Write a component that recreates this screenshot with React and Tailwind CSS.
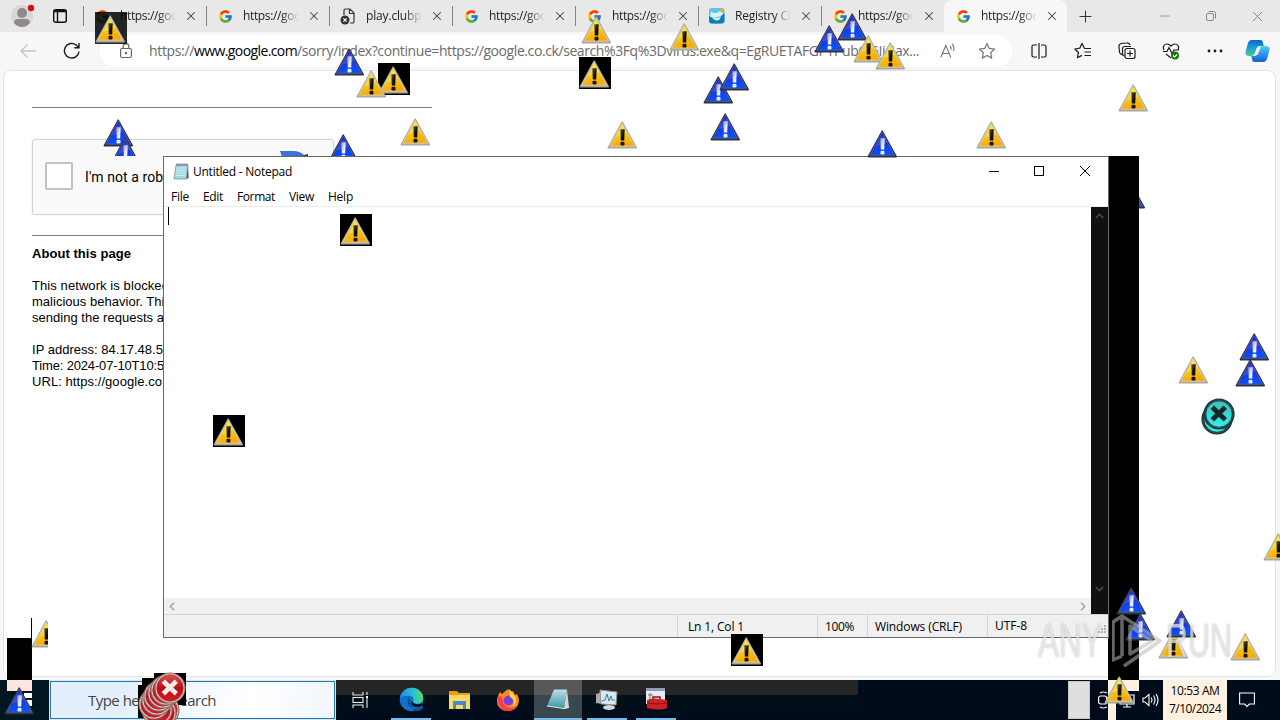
import React, { useLayoutEffect, useRef, useState } from 'react';
import { FcGoogle } from 'react-icons/fc';
import { Minus, Plus, X } from 'lucide-react';

// Text run that is spaced out to an exact width
const Fit = ({ w, className = '', children }) => {
  const ref = useRef(null);
  const [spacing, setSpacing] = useState(0);

  useLayoutEffect(() => {
    const width = ref.current.getBoundingClientRect().width;
    setSpacing((w - width) / ref.current.textContent.length);
  }, [w]);

  return (
    <span ref={ref} className={`inline-block whitespace-pre ${className}`} style={{ letterSpacing: `${spacing}px` }}>
      {children}
    </span>
  );
};

const Triangle = ({ x, y, blue, box, clip, glass }) => (
  <div
    className={`absolute h-8 overflow-hidden ${clip ? 'w-[17px]' : 'w-8'} ${box ? 'bg-black' : ''} ${glass ? 'bg-black/85' : ''}`}
    style={{ left: x, top: y }}
  >
    <svg width="32" height="32" viewBox="0 0 32 32">
      <defs>
        <linearGradient id="yellow" x1="0" y1="0" x2="0.25" y2="1">
          <stop offset="0" stopColor="#fffa00" />
          <stop offset="0.45" stopColor="#f4d01e" />
          <stop offset="1" stopColor="#f7ac08" />
        </linearGradient>
        <linearGradient id="blue" x1="0" y1="0" x2="0.25" y2="1">
          <stop offset="0" stopColor="#0000e8" />
          <stop offset="0.45" stopColor="#1a30da" />
          <stop offset="1" stopColor="#0a50fa" />
        </linearGradient>
        <linearGradient id="mark" x1="0" y1="0" x2="1" y2="1">
          <stop offset="0" stopColor="#6b5a28" />
          <stop offset="0.5" stopColor="#1a1408" />
          <stop offset="1" stopColor="#000" />
        </linearGradient>
        <linearGradient id="bluemark" x1="0" y1="0" x2="1" y2="1">
          <stop offset="0" stopColor="#8d9ad8" />
          <stop offset="0.6" stopColor="#e8ecfa" />
          <stop offset="1" stopColor="#fff" />
        </linearGradient>
      </defs>
      <path d="M15.2 4 29.3 29.7H1.3z" fill={blue ? '#2c324c' : '#aaa6a0'} stroke={blue ? '#2c324c' : '#aaa6a0'} strokeWidth="1.4" strokeLinejoin="round" />
      <path d="M15.2 5.4 27.7 28.2H2.8z" fill={blue ? 'url(#blue)' : 'url(#yellow)'} stroke={blue ? '#59607c' : '#d8cfae'} strokeWidth="0.9" strokeLinejoin="round" />
      <path d="M15.2 7.5 8.5 19.500c5-1 10-3 12-4.500z" fill="#fff" opacity={blue ? 0.12 : 0.22} />
      <path d="M13.3 11.300h4.400l-.5 11.200h-3.400z" fill={blue ? 'url(#bluemark)' : 'url(#mark)'} />
      <rect x="13.500" y="23.700" width="4" height="3.800" rx="1.200" fill={blue ? '#e9ebff' : '#1a1408'} />
    </svg>
  </div>
);

const ErrorBall = ({ x, y, teal }) => (
  <div className="absolute h-[33px] w-[33px]" style={{ left: x, top: y }}>
    <svg width="33" height="33" viewBox="0 0 33 33">
      <defs>
        <linearGradient id="red" x1="0" y1="0" x2="0" y2="1">
          <stop offset="0" stopColor="#dc5450" />
          <stop offset="0.5" stopColor="#bc0c16" />
          <stop offset="1" stopColor="#d41c26" />
        </linearGradient>
        <linearGradient id="teal" x1="0" y1="0" x2="0" y2="1">
          <stop offset="0" stopColor="#3dbcba" />
          <stop offset="1" stopColor="#2ff0ea" />
        </linearGradient>
      </defs>
      <circle cx="16" cy="16" r="15.600" fill={teal ? '#1f3436' : '#8f6a68'} />
      <circle cx="16" cy="16" r="14.500" fill={teal ? '#2c4a4c' : '#dccdc8'} />
      <circle cx="16" cy="16" r="13.200" fill={teal ? 'url(#teal)' : 'url(#red)'} stroke={teal ? '#122c30' : '#a03030'} strokeWidth="0.7" />
      <path d="m9.300 9.300 13 12.400M22.300 9.300l-13 12.400" stroke={teal ? '#16272a' : '#f0ece6'} strokeWidth="4.800" />
    </svg>
  </div>
);

const PageError = () => (
  <svg width="16" height="18" viewBox="0 0 16 18" fill="none" stroke="#333" strokeWidth="1.2">
    <path d="M4 8V3.500A1.500 1.500 0 0 1 5.500 2H10l4 4v8.500a1.500 1.500 0 0 1-1.500 1.500H10M9.500 2v4.500H14" />
    <circle cx="5" cy="13" r="4.500" fill="#333" stroke="none" />
    <path d="m3.400 11.400 3.200 3.200m0-3.200-3.200 3.200" stroke="#fff" />
  </svg>
);

const CleanerIcon = () => (
  <svg width="16" height="16" viewBox="0 0 16 16">
    <rect width="15.500" height="15.500" rx="3" fill="#5cc4e4" />
    <path d="M0 8q8 5 15.500-3v7.500a3 3 0 0 1-3 3H3a3 3 0 0 1-3-3z" fill="#0a7fb8" />
    <path d="M2 3.500q5 4 11-2L14 6Q8 12 1 8.500z" fill="#d7f2f8" />
    <path d="M3 9q5 3 9-1-1 5-5 4.500Q4 12 3 9z" fill="#e6f8fb" />
    <circle cx="13" cy="2.500" r="2" fill="#f3a33a" />
  </svg>
);

const tabs = [
  { title: 'https://goo' },
  { title: 'https://goo' },
  { title: 'play.clubpe', icon: <PageError /> },
  { title: 'https://goo' },
  { title: 'https://goo' },
  { title: 'Registry Cle', icon: <CleanerIcon /> },
  { title: 'https://goo' },
  { title: 'https://goo', active: true },
];

const TabBar = () => (
  <div className="flex h-8 shrink-0 items-stretch bg-[#e8e8e8]">
    <div className="flex w-[83px] items-center pl-[11px]">
      <svg width="24" height="24" viewBox="0 0 24 24" className="shrink-0">
        <circle cx="11" cy="12" r="11" fill="#d9d7d5" />
        <circle cx="11" cy="9" r="5" fill="#8e8a88" />
        <path d="M3 19q0-4 4-4h8q4 0 4 4-3.500 4-8 4t-8-4z" fill="#8e8a88" />
        <circle cx="20" cy="4" r="3.200" fill="#d70f1c" />
      </svg>
      <svg width="16" height="16" viewBox="0 0 16 16" fill="none" stroke="#111" strokeWidth="1.400" className="ml-[17px] shrink-0">
        <rect x="1.700" y="1.700" width="12.600" height="12.600" rx="2" />
        <path d="M5.500 4v10" />
        <path d="M2 3h12" strokeWidth="2.500" />
      </svg>
    </div>
    {tabs.map((tab, i) => (
      <div
        key={i}
        className={`flex w-[123px] items-center ${tab.active ? 'rounded-t-lg bg-[#f7f7f7] pl-[11px]' : ''}`}
      >
        {!tab.active && <span className="mr-[10px] h-5 w-px shrink-0 bg-[#858585]" />}
        <span className="flex w-4 shrink-0 justify-center">{tab.icon || <FcGoogle size={15} />}</span>
        <span className="ml-[10px] w-14 overflow-hidden text-[12px] leading-5 text-[#222] [mask-image:linear-gradient(to_right,black_68%,transparent)]">
          <Fit w={tab.icon ? 62 : 58}>{tab.title}</Fit>
        </span>
        <X size={14} strokeWidth={1.8} className="ml-2 shrink-0 text-[#444]" />
      </div>
    ))}
    <div className="flex flex-1 items-center justify-between pl-[9px]">
      <Plus size={19} strokeWidth={1.3} className="text-[#333]" />
      <div className="flex h-full items-center text-[#888]">
        <span className="flex w-[46px] justify-center"><Minus size={14} strokeWidth={1.5} /></span>
        <span className="flex w-[46px] justify-center">
          <svg width="12" height="12" viewBox="0 0 12 12" fill="none" stroke="currentColor">
            <rect x="1.500" y="3.500" width="7" height="7" rx="1.500" />
            <path d="M3.500 1.500h5a2 2 0 0 1 2 2v5" />
          </svg>
        </span>
        <span className="flex w-[46px] justify-center"><X size={17} strokeWidth={1.4} /></span>
      </div>
    </div>
  </div>
);

const ToolIcon = ({ children }) => (
  <span className="flex w-11 shrink-0 justify-center">
    <svg width="18" height="18" viewBox="0 0 18 18" fill="none" stroke="#1a1a1a" strokeWidth="1.200">
      {children}
    </svg>
  </span>
);

const Toolbar = () => (
  <div className="flex h-[38px] shrink-0 items-center bg-[#f7f7f7]">
    <div className="flex w-[100px] shrink-0 items-center pl-5">
      <svg width="16" height="16" viewBox="0 0 16 16" fill="none" stroke="#c4c4c4" strokeWidth="1.300">
        <path d="M16 8H1M7.500 1.500 1 8l6.500 6.500" />
      </svg>
      <svg width="18" height="18" viewBox="0 0 18 18" fill="none" stroke="#1a1a1a" strokeWidth="1.400" className="ml-[27px]">
        <path d="M16 9.500A7.300 7.300 0 1 1 13.500 3.200L15.500 5M16 1v4.700h-4.700" />
      </svg>
    </div>
    <div className="flex h-8 w-[912px] shrink-0 items-center rounded-full bg-white pl-5">
      <svg width="12" height="16" viewBox="0 0 12 16" fill="none" stroke="#666" strokeWidth="1.200" className="shrink-0">
        <rect x="0.600" y="5.500" width="10.800" height="9" rx="1.500" />
        <path d="M3.200 5.500V3.500a2.800 2.800 0 0 1 5.600 0v2" />
        <circle cx="6" cy="10" r="0.600" fill="#666" />
      </svg>
      <div className="ml-[17px] flex w-[771px] text-[14px] leading-5 text-[#6b6b6b]">
        <Fit w={45}>https://</Fit>
        <Fit w={103} className="text-black">www.google.com</Fit>
        <Fit w={622}>/sorry/index?continue=https://google.co.ck/search%3Fq%3Dvirus.exe&amp;q=EgRUETAFGPYPubQGIiGax...</Fit>
      </div>
      <svg width="17" height="16" viewBox="0 0 17 16" fill="none" stroke="#777" strokeWidth="1.100" className="ml-5 shrink-0">
        <path d="m.8 14.500 5-12 5 12M2.500 10.500h6.700M10 3q1.500 1.500 1 4M12 1q3 3 1.500 7" />
      </svg>
      <svg width="18" height="18" viewBox="0 0 18 18" fill="none" stroke="#777" strokeWidth="1.200" className="ml-[21px] shrink-0">
        <path d="m9 1.500 2.300 4.900 5.300.7-3.900 3.700 1 5.300L9 13.500l-4.700 2.600 1-5.300L1.400 7.100l5.300-.7z" strokeLinejoin="round" />
      </svg>
    </div>
    <div className="ml-[5px] flex flex-1 items-center">
      <ToolIcon><path d="M7 3H3.500A1.500 1.500 0 0 0 2 4.500v9A1.500 1.500 0 0 0 3.500 15H7M11 3h3.500A1.500 1.500 0 0 1 16 4.500v9a1.500 1.500 0 0 1-1.500 1.500H11M9 1v16" /></ToolIcon>
      <ToolIcon><path d="M10.500 6.500 8 1.500 5.700 6.200.8 7l3.600 3.500-1 5.200 4.500-2.300M10.500 6.500h6.500M10.500 10h6.500M10.500 13.500h6.500" strokeLinejoin="round" /></ToolIcon>
      <ToolIcon><path d="M5 12.500A3 3 0 0 1 1.500 10L1 5a3 3 0 0 1 2.500-3.500l5-.500A3 3 0 0 1 12 3M6.500 14a2 2 0 0 1-2-2V6.500a2 2 0 0 1 2-2H13" /><rect x="7" y="6.500" width="10" height="10" rx="2" /><path d="M12 8.500v6M9 11.500h6" /></ToolIcon>
      <ToolIcon>
        <path d="M2 8C0 4 3 2 5 2c2 0 3 1 4 2 1-1 2-2 4-2s5 2 3 6M1 9.500h4l2-4 3 6 2-3.500h5M4 12l5 4" />
        <circle cx="13" cy="13.500" r="4" fill="#107c10" stroke="none" />
        <path d="m11 13.500 1.500 1.500 2.700-2.700" stroke="#fff" />
      </ToolIcon>
      <ToolIcon><g fill="#1a1a1a" stroke="none"><circle cx="3" cy="9" r="1.400" /><circle cx="9" cy="9" r="1.400" /><circle cx="15" cy="9" r="1.400" /></g></ToolIcon>
      <svg width="25" height="24" viewBox="0 0 25 24" className="ml-[8px] shrink-0">
        <defs>
          <linearGradient id="cop1" x1="0" y1="0" x2="0" y2="1"><stop stopColor="#0f62d0" /><stop offset="0.500" stopColor="#1aa0d8" /><stop offset="1" stopColor="#49cf86" /></linearGradient>
          <linearGradient id="cop2" x1="0" y1="0" x2="0" y2="1"><stop stopColor="#4fccfa" /><stop offset="1" stopColor="#1160d8" /></linearGradient>
        </defs>
        <path d="M7 1h8q3 0 3 3l.7 3H15q-3 0-4 4l-1.500 4q-1 2-3 2H4q-4 0-3.500-4L3 4q1-3 4-3z" fill="url(#cop1)" />
        <path d="M18 23h-8q-3 0-3-3l-.7-3H9q3 0 4-4l1.500-4q1-2 3-2H21q4 0 3.500 4L22 20q-1 3-4 3z" fill="url(#cop2)" />
        <path d="M13 8.500h2.500l-3 7.500h-2z" fill="#f7f7f7" />
      </svg>
    </div>
  </div>
);

const SorryPage = () => (
  <div className="ml-[3px] mr-1 mb-[3px] flex-1 overflow-hidden rounded-lg border border-[#e4e4e4] bg-white pl-7 font-['Liberation_Sans',Arial,sans-serif] text-[13px] leading-4 text-black">
    <div className="mt-9 h-px w-[400px] bg-[#808080]" />
    <div className="mt-[31px] flex h-[76px] w-[302px] items-center rounded-[3px] border border-[#d3d3d3] bg-[#f9f9f9] pl-3 shadow-[0_0_3px_rgba(0,0,0,0.08)]">
      <div className="-mt-[3px] h-7 w-7 shrink-0 rounded-[2px] border-2 border-[#c1c1c1] bg-white" />
      <div className="ml-3 w-[155px] shrink-0 font-[Roboto,sans-serif] text-[14px]"><Fit w={91}>I'm not a robot</Fit></div>
      <svg width="32" height="32" viewBox="0 0 32 32" className="-mt-5 ml-[40px] shrink-0">
        <path d="M0 0h13q7 0 11 4l4-1v14H17l3-6Q16 6 2 6z" fill="#3f6fd8" />
        <path d="m22 5 6-2v14z" fill="#26357d" />
      </svg>
    </div>
    <div className="mt-5 h-px w-[400px] bg-[#808080]" />
    <div className="mt-2.5 font-bold"><Fit w={99}>About this page</Fit></div>
    <div className="mt-4 flex flex-col items-start">
      <Fit w={137}>This network is blocked</Fit>
      <Fit w={139}>malicious behavior. This</Fit>
      <Fit w={132}>sending the requests a</Fit>
    </div>
    <div className="mt-4 flex flex-col items-start">
      <Fit w={131}>IP address: 84.17.48.5</Fit>
      <Fit w={132}>Time: 2024-07-10T10:5</Fit>
      <Fit w={130}>URL: https://google.co</Fit>
    </div>
  </div>
);

const NotepadIcon = () => (
  <svg width="16" height="17" viewBox="0 0 16 17">
    <path d="M3 2h12l-1.500 14H1z" fill="#9fd6e0" stroke="#6b8f9a" strokeWidth="0.700" />
    <path d="M13.500 16 15 2l.7 13z" fill="#555" />
    <path d="M3.500 5h9.500M3.300 7.500h9.500M3 10h9.500M2.700 12.500h9.500" stroke="#d8f1f5" strokeWidth="0.900" />
    <path d="M3.500 1.500h11" stroke="#555" strokeWidth="2" strokeDasharray="1 1" />
  </svg>
);

const Notepad = () => (
  <div className="absolute left-[163px] top-[156px] flex h-[482px] w-[946px] flex-col border border-[#6a6a6a] bg-white text-[12px] text-black">
    <div className="flex h-[29px] shrink-0 items-center pl-[9px]">
      <NotepadIcon />
      <span className="ml-1 flex-1"><Fit w={99}>Untitled - Notepad</Fit></span>
      <svg width="112" height="12" viewBox="0 0 112 12" fill="none" stroke="#000" className="-mt-0.5 mr-[12px]">
        <path d="M5 6.500h10" />
        <rect x="50.500" y="1.500" width="9" height="9" />
        <path d="m96 1 10 10m0-10L96 11" />
      </svg>
    </div>
    <div className="flex h-[21px] shrink-0 items-center gap-[14px] border-b border-[#ececec] pl-[7px] pt-0.5">
      <Fit w={18}>File</Fit>
      <Fit w={20}>Edit</Fit>
      <Fit w={38}>Format</Fit>
      <Fit w={25}>View</Fit>
      <Fit w={25}>Help</Fit>
    </div>
    <div className="flex h-[407px] shrink-0">
      <div className="flex flex-1 flex-col">
        <div className="flex-1 pl-1"><div className="h-[18px] w-px bg-black" /></div>
        <div className="flex h-[16px] items-center justify-between bg-[#f0f0f0] px-[5px]">
          <svg width="6" height="9" viewBox="0 0 6 9" fill="none" stroke="#a0a0a0" strokeWidth="1.400"><path d="M5 .8 1.300 4.500 5 8.200" /></svg>
          <svg width="6" height="9" viewBox="0 0 6 9" fill="none" stroke="#a0a0a0" strokeWidth="1.400"><path d="m1 .8 3.700 3.700L1 8.200" /></svg>
        </div>
      </div>
      <div className="flex w-[17px] flex-col items-center justify-between bg-[#101010] pb-[22px] pt-1.5">
        <svg width="9" height="6" viewBox="0 0 9 6" fill="none" stroke="#4c4c4c" strokeWidth="1.400"><path d="M.8 5 4.500 1.300 8.200 5" /></svg>
        <svg width="9" height="6" viewBox="0 0 9 6" fill="none" stroke="#4c4c4c" strokeWidth="1.400"><path d="m.8 1 3.700 3.700L8.200 1" /></svg>
      </div>
    </div>
    <div className="flex h-[23px] shrink-0 border-t border-[#d4d4d4] bg-[#f0f0f0] leading-[23px]">
      <div className="w-[513px]" />
      <div className="w-[140px] border-l border-[#d4d4d4] pl-[10px]"><Fit w={56}>Ln 1, Col 1</Fit></div>
      <div className="w-[50px] border-l border-[#d4d4d4] pl-[7px]"><Fit w={29}>100%</Fit></div>
      <div className="w-[120px] border-l border-[#d4d4d4] pl-[7px]"><Fit w={87}>Windows (CRLF)</Fit></div>
      <div className="flex flex-1 items-end justify-between border-l border-[#d4d4d4] pl-[7px]">
        <Fit w={32}>UTF-8</Fit>
        <svg width="10" height="10" viewBox="0 0 10 10" fill="#b0b0b0" className="mb-0.5">
          <path d="M6 0h2v2H6zM3 3h2v2H3zM6 3h2v2H6zM0 6h2v2H0zM3 6h2v2H3zM6 6h2v2H6z" />
        </svg>
      </div>
    </div>
  </div>
);

const Taskbar = () => (
  <div className="flex h-10 shrink-0 bg-[#000b1c]">
    <div className="w-12 bg-[#001722]" />
    <div className="ml-px flex w-[287px] items-stretch border border-[#d5e8f5] bg-[#2779ad] p-px">
      <div className="flex flex-1 items-center bg-[linear-gradient(100deg,#e3f0fb_25%,#ffffff_70%,#f0f7fd)] pl-[37px] text-[15px] text-[#444]">
        <Fit w={128}>Type here to search</Fit>
      </div>
    </div>
    <div className="flex h-10 w-[522px] items-center bg-[linear-gradient(#252525_15px,#001018_15px,#000b1c)]">
      <span className="flex w-[48px] justify-center">
        <svg width="17" height="16" viewBox="0 0 17 16" fill="none" stroke="#eee" strokeWidth="1.100">
          <path d="M1 0v3h10V0M1 16v-3h10v3M15 0v3M15 7v9" />
          <rect x="1" y="5.500" width="10" height="5" />
          <rect x="14" y="4" width="2" height="2.500" fill="#fff" stroke="none" />
        </svg>
      </span>
      <span className="ml-[7px] flex h-full w-10 items-center justify-center border-b-2 border-[#76b9ed]">
        <svg width="25" height="25" viewBox="0 0 25 25">
          <defs><linearGradient id="edge" x1="0" y1="0" x2="1" y2="0"><stop stopColor="#1b8be0" /><stop offset="0.600" stopColor="#2ac3d2" /><stop offset="1" stopColor="#5bd864" /></linearGradient></defs>
          <circle cx="12.500" cy="12.500" r="11.800" fill="#1272c8" />
          <path d="M10 9.500c-3 5-1 10 4 12 4 .5 7-.5 9-3.500l1.500 3-4 3-6-.2z" fill="#0c4f98" />
          <path d="M.8 12C1.500 5 7 .700 12.500.700c7 0 11.800 5 11.800 10 0 4-3 6-6.500 6-3 0-4-1-4-2.500 1.500-1.500 1-5-3.500-5.500C6 8.500 2 9 .800 12z" fill="url(#edge)" />
          <path d="M13.800 14.200c0 2 2 3 5 3 2 0 4-1 5-2-.5 2-1.500 3.500-2.500 4.300-5 2-10-1-8.500-5.300z" fill="#001020" />
        </svg>
      </span>
      <span className="ml-[7px] flex w-[42px] justify-center">
        <svg width="23" height="20" viewBox="0 0 23 20">
          <path d="M1 1h8l2 2h11v4H1z" fill="#e5a019" /><path d="M1 5h21v14H1z" fill="#ffd862" />
          <path d="M5 11h13v8h-3v-4H8v4H5z" fill="#3a8ed0" />
        </svg>
      </span>
      <span className="ml-[7px] flex w-[42px] justify-center">
        <svg width="24" height="24" viewBox="0 0 24 24">
          <path d="M12 1l2 3 3-1 2 4 2-1c5 8 0 17-9 17S-1 16 2 8l2-4 2 2z" fill="#ff8a20" />
          <path d="M2 9c-1 9 4 14 10 14 4 0 8-2 10-6-5 5-15 3-15-4L5 8z" fill="#ff3d4e" />
          <circle cx="12.500" cy="12.500" r="5" fill="#7b40d8" />
          <path d="m13 1 3 3 4 6c1 4-1 8-4 9 3-4 2-8-2-10z" fill="#ffd43a" />
        </svg>
      </span>
      <span className="ml-[5px] flex h-full w-12 items-center justify-center border-b-2 border-[#76b9ed] bg-[linear-gradient(#585858_15px,#39474f_15px)]">
        <svg width="24" height="23" viewBox="0 0 24 23">
          <defs><linearGradient id="pad" x1="0" y1="0" x2="0" y2="1"><stop stopColor="#b9e2e6" /><stop offset="1" stopColor="#3f939e" /></linearGradient></defs>
          <path d="M8 1.500h13l-3 19L1 18z" fill="url(#pad)" /><path d="m18 20.500 3-19 2 18z" fill="#d5d5d5" />
          <path d="m1 18 17 2.500 5-1" stroke="#e8e8e8" fill="none" />
        </svg>
      </span>
      <span className="ml-[5px] flex h-full w-10 items-center justify-center border-b-2 border-[#76b9ed]">
        <svg width="24" height="23" viewBox="0 0 24 23">
          <path d="m1 6 6-2v12l-6-1z" fill="#aaa" /><path d="M5 2l17 2-1 13-15-1z" fill="#dfe7ea" stroke="#8a8f92" />
          <path d="m7 13 3-1 2-6 2 7 2-5 1 4h3" fill="none" stroke="#277fb2" /><ellipse cx="14" cy="19.500" rx="6" ry="2.500" fill="#d5d5d5" />
        </svg>
      </span>
      <span className="ml-[9px] flex h-full w-10 items-center justify-center border-b-2 border-[#76b9ed]">
        <svg width="23" height="24" viewBox="0 0 23 24">
          <path d="M1 1h19v16H1z" fill="#e8eaf0" /><path d="M1 1h19v3H1z" fill="#9299b8" /><path d="M5 6v8M3 8h5" stroke="#777" />
          <path d="M2 13q5-3 20 0v8q-6 3-20 0z" fill="#cf2028" /><path d="M8 12v-2h7v2" fill="none" stroke="#8a1218" strokeWidth="1.500" /><path d="M2 16q10 2 20 0" stroke="#861015" fill="none" />
        </svg>
      </span>
    </div>
    <div className="flex-1" />
    <div className="my-px w-[22px] border border-[#c8c8c8] bg-[#dedede]" />
    <div className="flex w-[73px] items-center pl-2">
      <svg width="11" height="18" viewBox="0 0 11 18" fill="none" stroke="#fff" strokeWidth="1.200"><rect x=".6" y="5" width="8" height="8" rx="2" /><path d="M2 2q3-2 7 0M2 16q3 2 7 0M8.500 7 11 6v6l-2.500-1" /></svg>
      <svg width="16" height="15" viewBox="0 0 16 15" fill="none" stroke="#fff" strokeWidth="1.200" className="ml-[10px]"><path d="M1 2h14v9H1zM4 14h8M8 11v3" /></svg>
      <svg width="17" height="14" viewBox="0 0 17 14" fill="none" stroke="#fff" strokeWidth="1.100" className="ml-[7px]"><path d="M1 5h2l4-3.500v11L3 9H1zM9 4.500q2 2.500 0 5M11.500 2.500q3 4.500 0 9M14 1q4 6 0 12" /></svg>
    </div>
    <div className="flex w-16 flex-col items-center justify-center bg-[#fff1e0] text-[12px] leading-[18px] text-black">
      <Fit w={49}>10:53 AM</Fit>
      <Fit w={52}>7/10/2024</Fit>
    </div>
    <div className="flex w-[53px] items-center pl-3">
      <svg width="16" height="16" viewBox="0 0 16 16" fill="none" stroke="#fff" strokeWidth="1.100"><path d="M.6 1h14.800v11h-5L8 14.500 5.600 12h-5z" /></svg>
    </div>
  </div>
);

const Watermark = () => (
  <div className="absolute left-[1038px] top-[608px] flex h-16 w-[200px] items-center font-['Liberation_Sans',Arial,sans-serif] text-[49px] leading-none text-white/60 [text-shadow:0_0_2px_rgba(110,110,110,0.5)]">
    <div className="w-[74px]"><span className="inline-block origin-left scale-x-[0.64]">ANY</span></div>
    <svg width="54" height="60" viewBox="0 0 54 60" fill="none" stroke="#b8b8b8" strokeOpacity="0.550" strokeWidth="3.500" strokeLinejoin="round">
      <path d="M10 46V6L48 31 12 56M10 6 1 12v38l9-4M18 16v28l22-13z" />
    </svg>
    <div className="w-[66px]"><span className="inline-block origin-left scale-x-[0.62]">RUN</span></div>
  </div>
);

const behind = [
  { x: 103, y: 116, blue: true }, { x: 328, y: 131, blue: true }, { x: 1115, y: 178, blue: true },
];

const icons = [
  { x: 95, y: 12, glass: true }, { x: 378, y: 63, box: true }, { x: 356, y: 67 }, { x: 334, y: 45, blue: true },
  { x: 400, y: 115 }, { x: 581, y: 13 }, { x: 579, y: 57, box: true }, { x: 669, y: 20 }, { x: 607, y: 118 },
  { x: 703, y: 73, blue: true }, { x: 719, y: 60, blue: true }, { x: 710, y: 110, blue: true },
  { x: 814, y: 22, blue: true }, { x: 837, y: 10, blue: true }, { x: 853, y: 32 }, { x: 875, y: 39 },
  { x: 867, y: 127, blue: true }, { x: 976, y: 118 }, { x: 1118, y: 81 },
  { x: 340, y: 214, box: true }, { x: 213, y: 415, box: true }, { x: 731, y: 634, box: true },
  { x: 1178, y: 353 }, { x: 1239, y: 330, blue: true }, { x: 1235, y: 356, blue: true }, { x: 1263, y: 530 },
  { x: 1158, y: 628 }, { x: 1230, y: 630 }, { x: 1104, y: 673 }, { x: 31, y: 617, clip: true },
  { x: 1125, y: 610, blue: true }, { x: 1116, y: 584, blue: true }, { x: 1166, y: 607, blue: true },
  { x: 4, y: 684, blue: true },
];

const App = () => {
  return (
    <div className="relative flex h-[720px] w-[1280px] flex-col overflow-hidden bg-[#f7f7f7] font-['Open_Sans','Noto_Sans',sans-serif]">
      <TabBar />
      <Toolbar />
      <SorryPage />
      <Taskbar />

      {behind.map((p, i) => <Triangle key={i} {...p} />)}
      <div className="absolute left-[110px] top-[134px] h-[22px] w-8 overflow-hidden">
        <Triangle x={0} y={0} blue />
      </div>

      {/* repaint trails left behind by dragged windows */}
      <div className="absolute left-[1109px] top-[156px] h-[524px] w-[30px] bg-black" />
      <div className="absolute left-[1108px] top-[638px] h-[42px] w-px bg-black" />
      <div className="absolute left-[1108px] top-[680px] h-[11px] w-[31px] bg-[#fff1e0]" />
      <div className="absolute left-[1108px] top-[680px] h-10 w-2 bg-[#fff1e0]" />
      <div className="absolute left-[7px] top-[638px] h-[42px] w-[25px] bg-black" />
      <div className="absolute left-[31px] top-[618px] h-5 w-px bg-black" />
      <div className="absolute left-[7px] top-[680px] h-[11px] w-[25px] bg-[#ffe4e0]" />
      <div className="absolute left-[24px] top-[693px] h-[5px] w-2 bg-white" />
      <div className="absolute left-[26px] top-[700px] h-[6px] w-1.5 bg-white" />

      <Notepad />

      {icons.map((p, i) => <Triangle key={i} {...p} />)}

      <ErrorBall x={1201} y={403} teal />
      <ErrorBall x={1203} y={398} teal />

      <div className="absolute left-[138px] top-[685px] h-[33px] w-8 bg-black" />
      <div className="absolute left-[142px] top-[678px] h-8 w-8 bg-black" />
      <div className="absolute left-[154px] top-[673px] h-8 w-8 bg-black" />
      <ErrorBall x={148} y={694} />
      <ErrorBall x={145} y={697} />
      <ErrorBall x={141} y={694} />
      <ErrorBall x={138} y={688} />
      <ErrorBall x={141} y={684} />
      <ErrorBall x={143} y={680} />
      <ErrorBall x={147} y={677} />
      <ErrorBall x={150} y={674} />
      <ErrorBall x={154} y={672} />

      <Watermark />
    </div>
  );
};

export default App;
